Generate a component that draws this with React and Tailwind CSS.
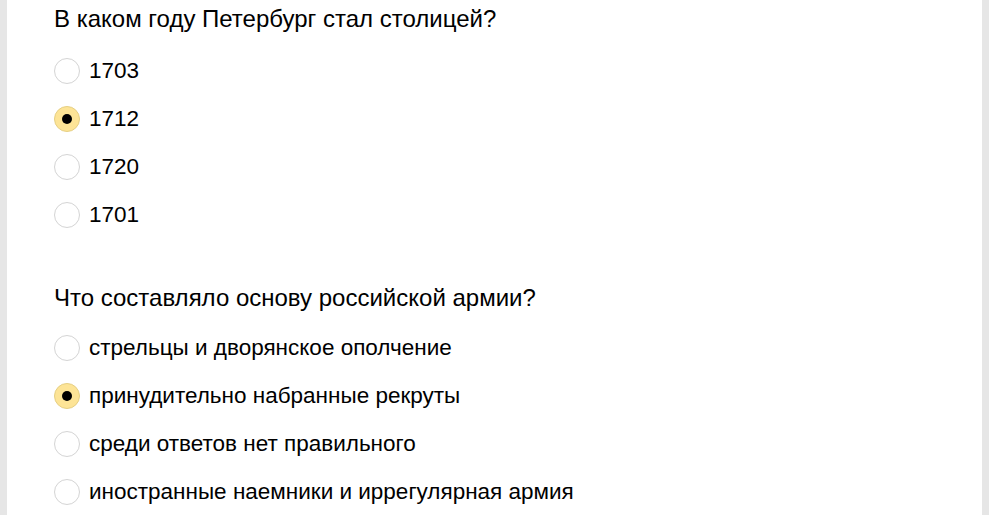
import React from "react";

const questions = [
  {
    q: "В каком году Петербург стал столицей?",
    options: ["1703", "1712", "1720", "1701"],
    selected: 1,
  },
  {
    q: "Что составляло основу российской армии?",
    options: [
      "стрельцы и дворянское ополчение",
      "принудительно набранные рекруты",
      "среди ответов нет правильного",
      "иностранные наемники и иррегулярная армия",
    ],
    selected: 1,
  },
];

function Radio({ checked }) {
  return checked ? (
    <span className="flex h-[26px] w-[26px] shrink-0 items-center justify-center rounded-full border border-[#e6cf82] bg-[#fde496]">
      <span className="h-[10px] w-[10px] rounded-full bg-black" />
    </span>
  ) : (
    <span className="h-[26px] w-[26px] shrink-0 rounded-full border border-[#d4d4d4] bg-white" />
  );
}

export default function App() {
  return (
    <div className="h-[519px] w-[990px] bg-white" style={{ fontFamily: '"Liberation Sans", Arial, sans-serif' }}>
      <div className="flex h-[515px] w-[989px]">
        <div className="w-[7px] shrink-0 bg-[#e6e6e6]" />
        <div className="flex-1 bg-white pl-[47px] pt-[5px] text-black">
          {questions.map((item, qi) => (
            <div key={qi} className={qi === 0 ? "" : "mt-[56px]"}>
              <div className="h-[28px] text-[24px] leading-[28px]">{item.q}</div>
              <div className={(qi === 0 ? "mt-[25px]" : "mt-[23px]") + " flex flex-col gap-[22px] text-[22.5px]"}>
                {item.options.map((o, oi) => (
                  <label key={oi} className="flex h-[26px] items-center gap-[9px]">
                    <Radio checked={oi === item.selected} />
                    <span className="leading-[26px]">{o}</span>
                  </label>
                ))}
              </div>
            </div>
          ))}
        </div>
        <div className="w-[7px] shrink-0 bg-[#e6e6e6]" />
      </div>
    </div>
  );
}
